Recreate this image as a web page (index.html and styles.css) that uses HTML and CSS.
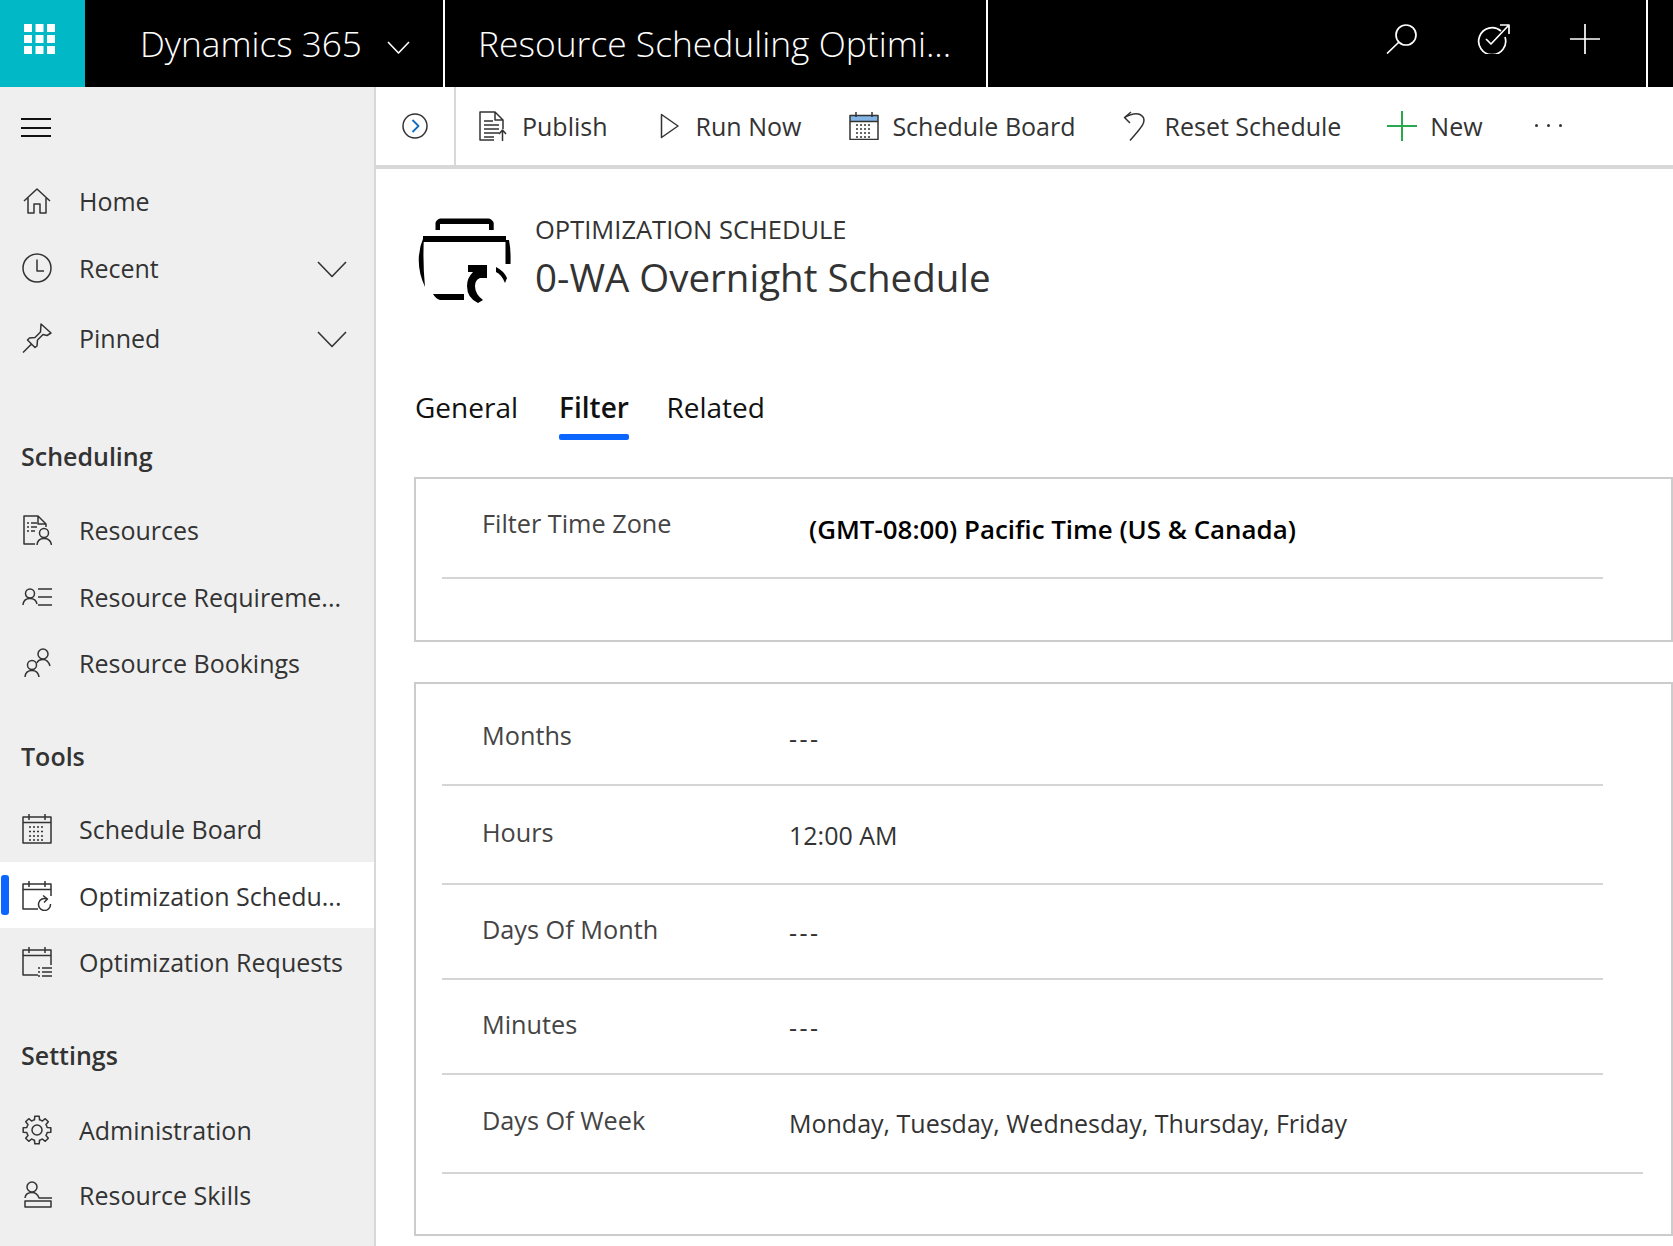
FILE: index.html
```html
<!DOCTYPE html>
<html lang="en">
<head>
<meta charset="utf-8">
<title>Resource Scheduling Optimization</title>
<link rel="stylesheet" href="styles.css">
</head>
<body>
<svg class="defs" width="0" height="0" aria-hidden="true">
  <defs>
    <g id="tooth"><path d="M10.98 5.3L12.46 4.81L12.81 1.17H17.19L17.54 4.81L19.02 5.3"/></g>
    <g id="cal-head"><path d="M7 0V6M23 0V6M1 8.5H29"/></g>
  </defs>
</svg>
<header class="topbar">
  <div class="waffle">
    <svg class="waffle-icon" viewBox="0 0 31 30"><g fill="#fff"><rect width="8" height="8"/><rect x="11.5" width="8" height="8"/><rect x="23" width="8" height="8"/><rect y="11" width="8" height="8"/><rect x="11.5" y="11" width="8" height="8"/><rect x="23" y="11" width="8" height="8"/><rect y="22" width="8" height="8"/><rect x="11.5" y="22" width="8" height="8"/><rect x="23" y="22" width="8" height="8"/></g></svg>
  </div>
  <div class="brand">
    <span class="brand-name">Dynamics 365</span>
    <svg class="brand-chevron" viewBox="0 0 23 13"><path d="M1 1L11.5 12L22 1"/></svg>
  </div>
  <div class="app-name"><span class="app-text">Resource Scheduling Optimi...</span></div>
  <div class="top-actions">
    <svg class="top-icon" viewBox="0 0 32 30"><circle cx="20" cy="11" r="10"/><path d="M13 18L1 29.5"/></svg>
    <svg class="top-icon task" viewBox="0 0 33 30"><path d="M24 7A13.5 13.5 0 1 0 28 13"/><path d="M9 15L14 20L31 2M23 1H32V10"/></svg>
    <svg class="top-icon plus" viewBox="0 0 30 30"><path d="M15 0V30M0 15H30"/></svg>
  </div>
  <div class="top-end"></div>
</header>
<div class="main">
  <nav class="sidebar">
    <div class="burger"><span></span><span></span><span></span></div>
    <ul class="nav-list primary">
      <li class="nav-row"><svg class="nav-icon" viewBox="0 0 30 30"><path d="M2 15L15 3L28 15M6 12V27H12V18H18V27H24V12"/></svg><span class="nav-label">Home</span></li>
      <li class="nav-row"><svg class="nav-icon" viewBox="0 0 30 30"><circle cx="15" cy="15" r="14"/><path d="M15 6.5V18H22"/></svg><span class="nav-label">Recent</span><svg class="nav-chevron" viewBox="0 0 30 17"><path d="M1 1L15 15.5L29 1"/></svg></li>
      <li class="nav-row pinned"><svg class="nav-icon" viewBox="0 0 30 30"><path d="M1 29.5L10 20.5M19 1L29 10L25 12.5L21 11.5L15.5 17L15 23L13 24.5L5.5 17L7.5 15L13 14.5L18.5 9Z"/></svg><span class="nav-label">Pinned</span><svg class="nav-chevron" viewBox="0 0 30 17"><path d="M1 1L15 15.5L29 1"/></svg></li>
    </ul>
    <h2 class="nav-heading first">Scheduling</h2>
    <ul class="nav-list">
      <li class="nav-row"><svg class="nav-icon" viewBox="0 0 30 30"><path d="M13 29H2V1H16L24 9V12M16 1V9H24M9 8H15M9 12H15M9 16H13M5 8H7M5 12H7M5 16H7"/><circle cx="22" cy="18" r="4.5"/><path d="M15 30Q15.5 23.5 22 23.5Q28.5 23.5 29.5 30"/></svg><span class="nav-label">Resources</span></li>
      <li class="nav-row"><svg class="nav-icon" viewBox="0 0 30 30"><circle cx="8" cy="11.5" r="4.5"/><path d="M1 23Q1.5 16.5 8 16.5Q14 16.5 15 22M16 7H30M16 15H30M16 23H30"/></svg><span class="nav-label">Resource Requireme...</span></li>
      <li class="nav-row"><svg class="nav-icon" viewBox="0 0 30 30"><circle cx="10" cy="17" r="4.5"/><path d="M3 29Q3.5 22.5 10 22.5Q16 22.5 17 29"/><circle cx="21" cy="6" r="5"/><path d="M15 15Q16 11.5 21 11.5Q26 11.5 28 18"/></svg><span class="nav-label">Resource Bookings</span></li>
    </ul>
    <h2 class="nav-heading">Tools</h2>
    <ul class="nav-list">
      <li class="nav-row"><svg class="nav-icon" viewBox="0 0 30 30"><rect x="1" y="3" width="28" height="26"/><use href="#cal-head"/><path class="dots" d="M7 13H23M7 17.5H23M7 22H23M7 26H23"/></svg><span class="nav-label">Schedule Board</span></li>
      <li class="nav-row active"><svg class="nav-icon" viewBox="0 0 30 30"><path d="M16 28H1V3H29V15"/><use href="#cal-head"/><path d="M28.5 23A6 6 0 1 1 25 18M21 14.5L25.5 18L22 21.5"/></svg><span class="nav-label">Optimization Schedu...</span></li>
      <li class="nav-row"><svg class="nav-icon" viewBox="0 0 30 30"><path d="M16 28H1V3H29V18"/><use href="#cal-head"/><path d="M20 21H30M20 25H30M20 29H30M16 21H18M16 25H18M16 29H18"/></svg><span class="nav-label">Optimization Requests</span></li>
    </ul>
    <h2 class="nav-heading settings">Settings</h2>
    <ul class="nav-list">
      <li class="nav-row"><svg class="nav-icon" viewBox="0 0 30 30"><use href="#tooth"/><use href="#tooth" transform="rotate(45 15 15)"/><use href="#tooth" transform="rotate(90 15 15)"/><use href="#tooth" transform="rotate(135 15 15)"/><use href="#tooth" transform="rotate(180 15 15)"/><use href="#tooth" transform="rotate(225 15 15)"/><use href="#tooth" transform="rotate(270 15 15)"/><use href="#tooth" transform="rotate(315 15 15)"/><circle cx="15" cy="15" r="5"/></svg><span class="nav-label">Administration</span></li>
      <li class="nav-row skills"><svg class="nav-icon" viewBox="0 0 30 30"><circle cx="10" cy="7" r="5"/><path d="M3 18Q3.5 12.5 10 12.5Q15 12.5 17 18H30"/><rect x="3" y="21" width="26" height="6"/></svg><span class="nav-label">Resource Skills</span></li>
    </ul>
  </nav>
  <main class="content">
    <div class="cmdbar">
      <div class="cmd-toggle"><svg class="toggle-icon" viewBox="0 0 26 26"><circle cx="13" cy="13" r="12"/><path class="blue" d="M10.5 7L16.5 13L10.5 19"/></svg></div>
      <div class="cmd-items">
        <div class="cmd pub"><svg class="cmd-icon" viewBox="0 0 28 30"><path d="M15 29H1V1H16L24 9V18M16 1V9H24M5 10H14M5 14H20M5 18H20M5 22H20M5 26H15M23.5 30V19M20 23L23.5 19L27 23"/></svg><span>Publish</span></div>
        <div class="cmd run"><svg class="cmd-icon run-icon" viewBox="0 0 20 26"><path d="M1.5 1.5L18 13L1.5 24.5Z"/></svg><span>Run Now</span></div>
        <div class="cmd board"><svg class="cmd-icon" viewBox="0 0 30 28"><rect class="cal-fill" x="1" y="3.5" width="28" height="6"/><rect x="1" y="3.5" width="28" height="24"/><path d="M7 0V5M23 0V5M1 9.5H29"/><path class="dots" d="M7 13H23M7 17H23M7 21H23M7 25H23"/></svg><span>Schedule Board</span></div>
        <div class="cmd reset"><svg class="cmd-icon" viewBox="0 0 23 30"><path d="M8 1L1.5 6.5L7 12M1.5 6.5C8 3 16 1 20 6C24 12 15 20 7 29.5"/></svg><span>Reset Schedule</span></div>
        <div class="cmd new"><svg class="cmd-icon green" viewBox="0 0 30 30"><path d="M15 0V30M0 15H30"/></svg><span>New</span></div>
        <div class="cmd-more"><i></i><i></i><i></i></div>
      </div>
    </div>
    <div class="record">
      <div class="record-head">
        <svg class="record-icon" viewBox="0 0 93 85"><path d="M17.5 12V5Q18 2 22 .5H71Q75 2 75.7 5V12H71V6H22V12Z"/><rect x="5" y="18" width="83" height="6"/><path d="M6 18Q-5 43 7 69Q4.5 43 6 18Z"/><path d="M87.5 22H91Q93 32 92.5 46H87.5Z"/><path d="M15 76H46V82H22Q18 81 15 76Z"/><path d="M50 47H69V60H62Q57 62 57 68Q57 76 65 82L60 85Q49 80 49 68Q49 60 55 54H50Z"/><path d="M78 49Q86 53 89 60L87 65Q84 57 78 54Z"/></svg>
        <div class="record-titles">
          <div class="entity">OPTIMIZATION SCHEDULE</div>
          <h1 class="title">0-WA Overnight Schedule</h1>
        </div>
      </div>
      <div class="tabs">
        <span class="tab">General</span>
        <span class="tab current">Filter</span>
        <span class="tab">Related</span>
      </div>
      <section class="card tz">
        <div class="field"><span class="f-label">Filter Time Zone</span><span class="f-value zone">(GMT-08:00) Pacific Time (US &amp; Canada)</span></div>
      </section>
      <section class="card recur">
        <div class="field r1"><span class="f-label">Months</span><span class="f-value dash">---</span></div>
        <div class="field r2"><span class="f-label">Hours</span><span class="f-value">12:00 AM</span></div>
        <div class="field r3"><span class="f-label">Days Of Month</span><span class="f-value dash">---</span></div>
        <div class="field r3"><span class="f-label">Minutes</span><span class="f-value dash">---</span></div>
        <div class="field r2 wide"><span class="f-label">Days Of Week</span><span class="f-value">Monday, Tuesday, Wednesday, Thursday, Friday</span></div>
      </section>
    </div>
  </main>
</div>
</body>
</html>
```
FILE: styles.css
```css
* { box-sizing: border-box; }
html, body { margin: 0; height: 1246px; overflow: hidden; }
body { font-family: "Open Sans", "Noto Sans", sans-serif; background: #fff; color: #333; display: flex; flex-direction: column; }
.defs { display: block; height: 0; }
svg { fill: none; stroke-linejoin: round; flex: none; display: block; }

.topbar { height: 87px; background: #000; color: #fff; display: flex; flex: none; }
.waffle { width: 85px; background: #01b8c6; padding: 24px 0 0 24px; }
.waffle-icon { width: 31px; height: 30px; }
.brand { width: 360px; border-right: 2px solid #fff; display: flex; align-items: center; padding-left: 55px; }
.brand-name { font-size: 35.2px; font-weight: 300; width: 247px; white-space: nowrap; margin-bottom: 2px; }
.brand-chevron { width: 23px; height: 13px; stroke: #fff; stroke-width: 1.6; margin-top: 7px; }
.app-name { width: 543px; border-right: 2px solid #fff; font-size: 35.4px; font-weight: 300; padding-left: 33px; display: flex; align-items: center; white-space: nowrap; }
.app-text { margin-bottom: 2px; }
.top-actions { flex: 1; display: flex; padding: 24px 0 0 398px; gap: 59px; }
.top-icon { width: 32px; height: 30px; stroke: #fff; stroke-width: 1.7; }
.top-icon.task { width: 33px; }
.top-icon.plus { width: 30px; margin-left: 1px; }
.top-end { width: 27px; border-left: 2px solid #fff; flex: none; }

.main { flex: 1; display: flex; min-height: 0; }
.sidebar { width: 376px; flex: none; background: #efefef; border-right: 2px solid #d8d8d8; overflow: hidden; }
.burger { height: 81px; padding: 31px 0 0 21px; display: flex; flex-direction: column; gap: 6.500px; }
.burger span { display: block; width: 30px; height: 2px; background: #111; }
.nav-list { list-style: none; margin: 0; padding: 0; }
.nav-list.primary { display: flex; flex-direction: column; gap: 1px; }
.nav-row { height: 66.500px; padding: 2px 0 0 22px; display: flex; align-items: center; position: relative; font-size: 25px; }
.primary .nav-row { height: 66px; padding-top: 0; }
.primary .nav-row.pinned { margin-top: 3px; }
.nav-row.skills { margin-top: -2px; }
.nav-row.active { background: #fff; }
.nav-row.active::before { content: ""; position: absolute; left: 1px; top: 13px; width: 8px; height: 40px; border-radius: 3px; background: #0a66ff; }
.nav-icon { width: 30px; height: 30px; stroke: #333; stroke-width: 1.5; }
.nav-icon .dots { stroke-dasharray: 2 2; }
.nav-label { margin-left: 27px; white-space: nowrap; }
.nav-chevron { width: 30px; height: 17px; stroke: #333; stroke-width: 1.6; margin-left: auto; margin-right: 27px; margin-top: 2px; }
.nav-heading { font-size: 25px; font-weight: 600; line-height: 40px; margin: 40.500px 0 19px 21px; color: #333; }
.nav-heading.first { margin: 65px 0 20px 21px; }
.nav-heading.settings { margin-bottom: 21px; }

.content { flex: 1; min-width: 0; display: flex; flex-direction: column; }
.cmdbar { height: 82px; border-bottom: 4px solid #d8d8d8; display: flex; flex: none; }
.cmd-toggle { width: 80px; border-right: 2px solid #d8d8d8; padding: 26px 0 0 26px; flex: none; }
.toggle-icon { width: 26px; height: 26px; stroke: #333; stroke-width: 1.5; }
.toggle-icon .blue { stroke: #106ebe; stroke-width: 1.8; }
.cmd-items { display: flex; align-items: center; padding-left: 23px; font-size: 25px; }
.cmd { display: flex; align-items: center; white-space: nowrap; }
.cmd-icon { stroke: #333; stroke-width: 1.5; width: 28px; height: 30px; margin-right: 15px; }
.run { margin-left: 52px; }
.run-icon { width: 20px; height: 26px; margin-right: 16px; }
.board { margin-left: 48px; }
.board .cmd-icon { width: 30px; height: 28px; margin-right: 13px; }
.cal-fill { fill: #83b5e6; stroke: none; }
.cmd-icon .dots { stroke-dasharray: 2 2; }
.reset { margin-left: 47px; }
.reset .cmd-icon { width: 23px; margin-right: 19px; }
.new { margin-left: 46px; }
.new .cmd-icon { width: 30px; margin-right: 13px; }
.cmd-icon.green { stroke: #2aa84f; stroke-width: 2; }
.cmd-more { display: flex; gap: 9px; margin-left: 52px; margin-top: -2px; }
.cmd-more i { width: 3px; height: 3px; background: #333; border-radius: 50%; display: block; }

.record { flex: 1; padding: 49px 0 0 38px; min-height: 0; overflow: hidden; }
.record-head { display: flex; height: 85px; padding-left: 4px; }
.record-icon { width: 93px; height: 85px; fill: #000; overflow: visible; }
.record-titles { margin-left: 24px; }
.entity { font-size: 25.500px; line-height: 24px; margin-top: -1px; }
.title { font-size: 38.500px; font-weight: 400; line-height: 50px; margin: 11px 0 0; }
.tabs { display: flex; margin-top: 83px; margin-left: 1px; font-size: 28px; color: #111; }
.tab { padding: 0 0 12px; margin-right: 41px; line-height: 42px; position: relative; }
.tab.current { font-weight: 600; color: #111; margin-right: 37.500px; }
.tab.current::after { content: ""; position: absolute; left: 0; right: 0; bottom: 0; height: 6px; border-radius: 2px; background: #0a66ff; }
.card { border: 2px solid #ccc; margin-top: 37px; }
.tz { height: 165px; padding: 0 68px 0 26px; }
.recur { height: 554px; margin-top: 40px; padding: 0 68px 0 26px; }
.field { display: flex; border-bottom: 2px solid #d5d5d5; font-size: 25px; }
.tz .field { height: 100px; }
.f-label { width: 347px; padding-left: 40px; color: #444; font-size: 25.250px; white-space: nowrap; line-height: 34px; }
.f-value { white-space: nowrap; line-height: 34px; padding-top: 3px; }
.dash { letter-spacing: 2.500px; }
.zone { font-weight: 600; font-size: 25.900px; color: #000; margin-left: 20px; padding-top: 6px; }
.tz .f-label { margin-top: 27px; }
.tz .zone { margin-top: 27px; }
.recur .r1 { height: 102px; padding-top: 34px; }
.recur .r2 { height: 99px; padding-top: 29px; }
.recur .r3 { height: 95px; padding-top: 27px; }
.recur .wide { height: 99px; padding-top: 28px; margin-right: -40px; }
```
